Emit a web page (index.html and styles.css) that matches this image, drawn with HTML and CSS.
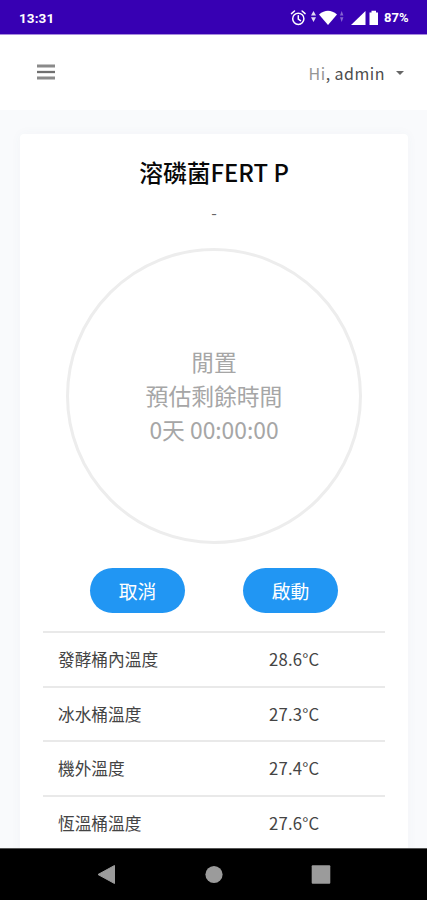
FILE: index.html
```html
<!DOCTYPE html>
<html lang="zh-Hant">
<head>
<meta charset="utf-8">
<title>FERT P</title>
<link rel="stylesheet" href="styles.css">
</head>
<body>
<div class="screen">
  <div class="status">
    <span class="clock">13:31</span>
    <svg class="signals" width="90" height="20" viewBox="0 0 90 20" fill="#fff">
      <g fill="none" stroke="#fff" stroke-width="1.5" stroke-linecap="round">
        <circle cx="9.3" cy="10.8" r="5.6"/>
        <path d="M9.3 7.7v3.5l2.2 1.4M2.500 5.600l3-2.600M16.100 5.600l-3-2.600"/>
      </g>
      <path d="M22 7.600l2.500-4.600 2.500 4.600zM22 9.300h5l-2.500 4.600z" opacity=".85"/>
      <path d="M30 6.500Q39 -1 48 6.500L39 17z"/>
      <path d="M51 7.600l1.700-4.600 1.700 4.600zM51 9.300h3.400l-1.700 4.600z" opacity=".4"/>
      <path d="M62 17L76.500 3v14z"/>
      <path d="M80.500 4.500h2V2.800h4.500v1.700h2V17h-8.500z"/>
    </svg>
    <span class="battery">87%</span>
  </div>
  <header class="topbar">
    <svg width="18" height="16" viewBox="0 0 18 16"><path d="M0 2h18M0 14h18" stroke="#8a8a8a" stroke-width="2.800"/><path d="M0 8h18" stroke="#707070" stroke-width="2.300"/></svg>
    <div class="user"><span class="greeting">Hi</span><span class="comma">,</span><span>admin</span><i class="caret"></i></div>
  </header>
  <main class="content">
    <section class="card">
      <h1>溶磷菌FERT P</h1>
      <div class="subtitle">-</div>
      <div class="ring">
        <div>閒置</div>
        <div>預估剩餘時間</div>
        <div>0天 00:00:00</div>
      </div>
      <div class="actions"><button>取消</button><button>啟動</button></div>
      <div class="readings">
        <div class="row"><span>發酵桶內溫度</span><span>28.6°C</span></div>
        <div class="row"><span>冰水桶溫度</span><span>27.3°C</span></div>
        <div class="row"><span>機外溫度</span><span>27.4°C</span></div>
        <div class="row"><span>恆溫桶溫度</span><span>27.6°C</span></div>
      </div>
    </section>
  </main>
  <nav class="navbar">
    <svg width="20" height="22" viewBox="0 0 20 22"><path d="M2 10.500L18.500 1.500v18z" fill="#9b9b9b" stroke="#9b9b9b" stroke-linejoin="round"/></svg>
    <svg width="20" height="22" viewBox="0 0 20 22"><circle cx="10" cy="10.500" r="8.600" fill="#9b9b9b"/></svg>
    <svg width="20" height="22" viewBox="0 0 20 22"><rect x=".7" y="1.300" width="18.600" height="18.400" rx="1" fill="#9b9b9b"/></svg>
  </nav>
</div>
</body>
</html>
```
FILE: styles.css
```css
* { box-sizing: border-box; }
body { margin: 0; background: #f9fafc; color: #333; font-family: "Noto Sans CJK TC", sans-serif; }
.screen { display: flex; flex-direction: column; height: 900px; overflow: hidden; }
.status {
  flex: none; height: 35px; padding: 2px 18px 0 19px; display: flex; align-items: center;
  background: #3700b3; border-bottom: 1px solid #a78bdc; color: #fff;
  font: 700 13.500px/20px Roboto, sans-serif;
}
.clock { flex: 1; letter-spacing: .1px; }
.signals { margin-right: 5px; }
.battery { font-size: 13px; width: 25px; white-space: nowrap; }
.topbar {
  flex: none; height: 75px; padding: 0 23px 0 37px; display: flex; align-items: center;
  justify-content: space-between; background: #fff;
}
.topbar > svg { margin-top: -1px; }
.user { display: flex; align-items: center; font-size: 16px; line-height: 24px; letter-spacing: .5px; color: #4c4c4c; margin-top: 1px; }
.greeting { color: #959595; }
.comma { margin-right: 4px; }
.caret { margin: -1px 0 0 11px; border: 4px solid transparent; border-top-color: #666; border-bottom: 0; }
.content { flex: 1; min-height: 0; overflow: hidden; padding: 24px 19px 0 20px; background: #f9fafc; }
.card { height: 760px; padding: 21px 23px; background: #fff; border-radius: 4px; box-shadow: 0 0 12px rgba(80, 110, 130, .04); }
h1 { margin: 0; text-align: center; font-size: 23.800px; line-height: 34px; font-weight: 500; color: #080808; }
.subtitle { height: 24px; margin-top: 11px; text-align: center; font-size: 16px; line-height: 24px; color: #666; }
.ring {
  width: 296px; height: 296px; margin: 24px auto 0; border: 3px solid #ededed; border-radius: 50%;
  display: flex; flex-direction: column; justify-content: center; text-align: center;
  font-size: 22.800px; line-height: 34px; color: #a6a6a6;
}
.actions { display: flex; justify-content: center; gap: 58px; margin-top: 24px; }
button {
  width: 95px; height: 45px; padding: 0; border: 0; border-radius: 23px; background: #2196f3;
  color: #fff; font: 400 18.800px/45px "Noto Sans CJK TC", sans-serif;
}
.readings { margin-top: 18px; }
.row {
  display: grid; grid-template-columns: 211px 1fr; height: 54.500px; padding: 0 15px; align-items: center;
  border-top: 2px solid #e9e9e9; font-size: 16.700px; color: #444;
}
.row span:last-child { letter-spacing: .2px; }
.navbar { flex: none; height: 52px; padding: 1px 96px 0; display: flex; align-items: center; justify-content: space-between; background: #000; border-top: 1px solid #555; }
```
